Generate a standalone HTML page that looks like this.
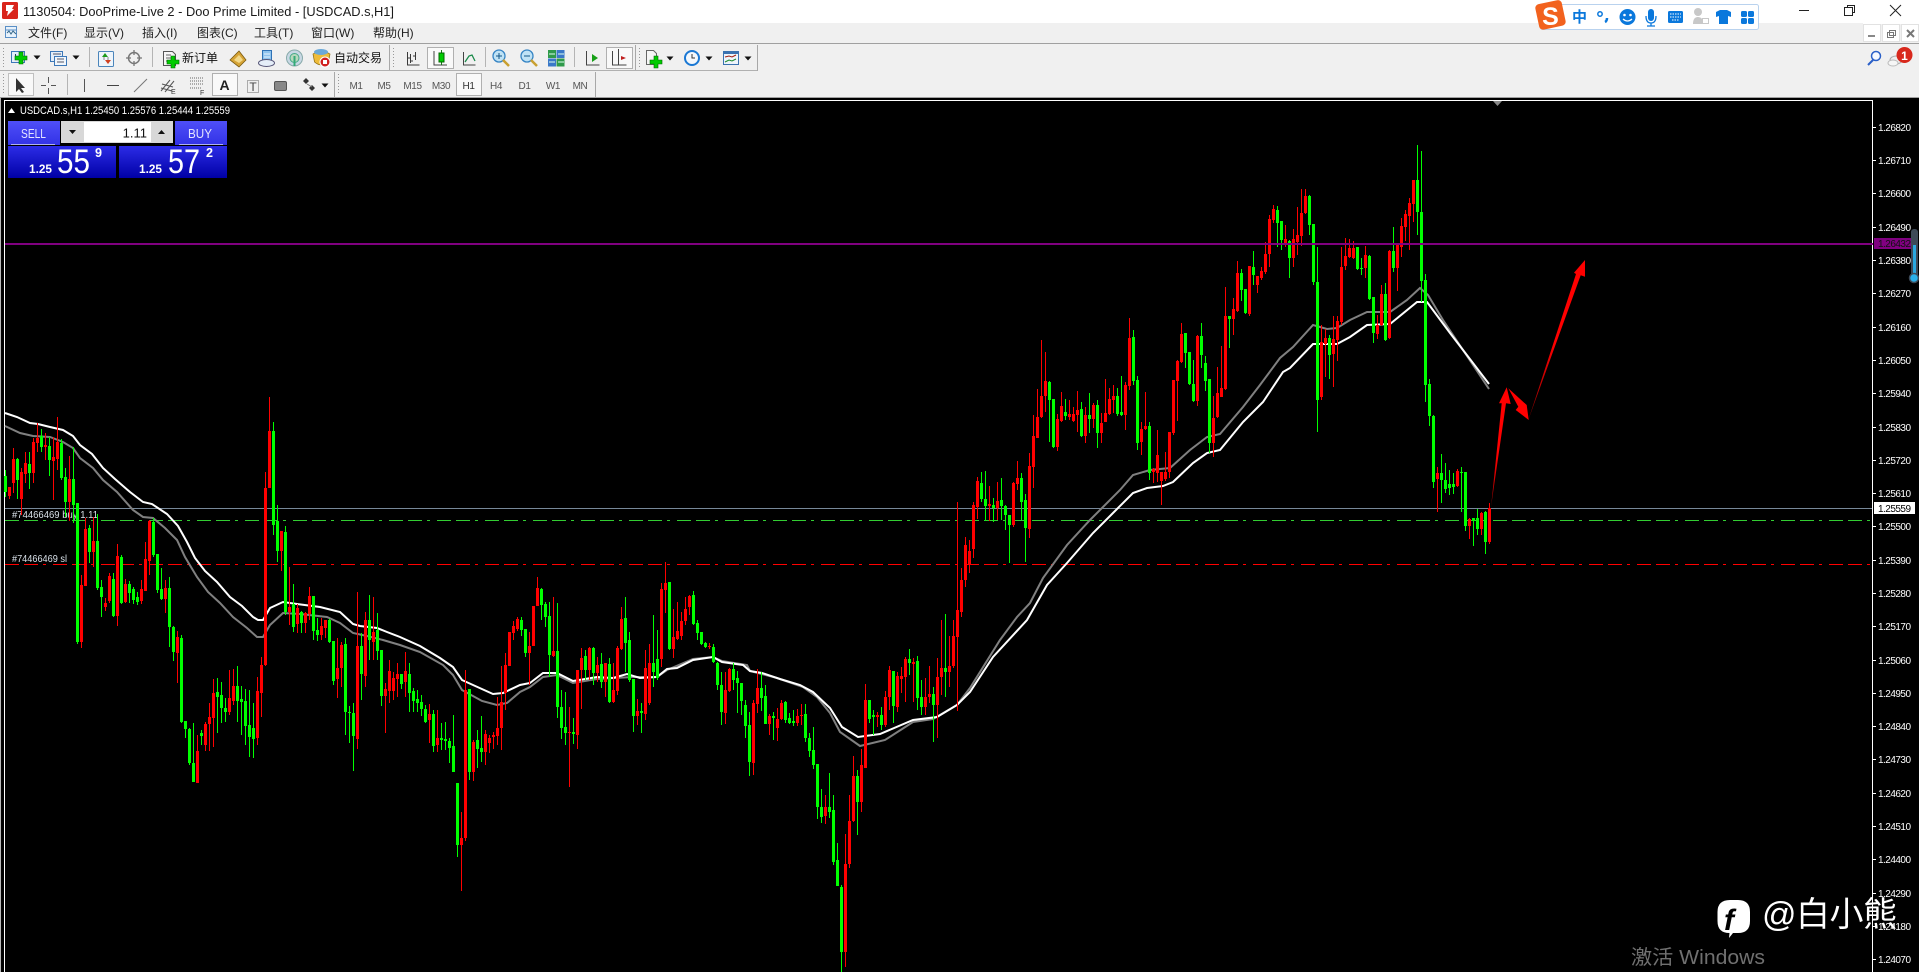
<!DOCTYPE html>
<html><head><meta charset="utf-8"><title>MT4</title>
<style>html,body{margin:0;padding:0;background:#000;overflow:hidden}svg{display:block}</style></head><body>
<svg xmlns="http://www.w3.org/2000/svg" width="1919" height="972" viewBox="0 0 1919 972" font-family="'Liberation Sans','Noto Sans CJK SC',sans-serif">
<defs>
<linearGradient id="btn" x1="0" y1="0" x2="0" y2="1"><stop offset="0" stop-color="#4f4ff8"/><stop offset="1" stop-color="#3232e6"/></linearGradient>
<linearGradient id="prc" x1="0" y1="0" x2="0" y2="1"><stop offset="0" stop-color="#2c2ce6"/><stop offset="1" stop-color="#0000a6"/></linearGradient>
<linearGradient id="a1" gradientUnits="userSpaceOnUse" x1="1491" y1="507" x2="1506" y2="400"><stop offset="0" stop-color="#900"/><stop offset=".5" stop-color="#f00"/></linearGradient>
<linearGradient id="a3" gradientUnits="userSpaceOnUse" x1="1528" y1="420" x2="1570" y2="290"><stop offset="0" stop-color="#800"/><stop offset=".6" stop-color="#f00"/></linearGradient>
<g id="plus"><path d="M-2-6h4v4h4v4h-4v4h-4v-4h-4v-4h4z" fill="#0c0" stroke="#060" stroke-width=".6"/></g>
<g id="dd"><path d="M-3.500-1.500h7l-3.500 4z" fill="#111"/></g>
</defs>
<!-- window chrome -->
<rect width="1919" height="98" fill="#f0f0f0"/>
<rect width="1919" height="23" fill="#fff"/>
<rect x="1863" y="23" width="56" height="1" fill="#fff"/>
<rect y="43" width="1919" height="1" fill="#a0a0a0"/>
<rect y="70" width="758" height="1" fill="#b0b0b0"/>
<rect y="97" width="1919" height="1" fill="#a0a0a0"/>
<!-- title -->
<rect x="2" y="2" width="16" height="17" rx="1.500" fill="#d9251c"/>
<path d="M6 5h8l-2 4h2l-7 7 1-5H6z" fill="#fff"/>
<text x="23" y="16" font-size="13" fill="#1a1a1a" textLength="371" lengthAdjust="spacingAndGlyphs">1130504: DooPrime-Live 2 - Doo Prime Limited - [USDCAD.s,H1]</text>
<!-- menu -->
<rect x="5.500" y="26.500" width="11" height="11" fill="#e8f2fb" stroke="#5a8fc6"/>
<path d="M7 33l2-2 2 3 2-3 3 3" fill="none" stroke="#368" stroke-width="1"/><path d="M5 30h12" stroke="#5a8fc6"/>
<g font-size="12" fill="#222">
<text x="28" y="37">文件(F)</text><text x="84" y="37">显示(V)</text><text x="142" y="37">插入(I)</text><text x="197" y="37">图表(C)</text><text x="254" y="37">工具(T)</text><text x="311" y="37">窗口(W)</text><text x="373" y="37">帮助(H)</text>
</g>
<!-- toolbar separators -->
<g fill="#b4b4b4">
<rect x="89" y="47" width="1" height="20"/><rect x="152" y="47" width="1" height="20"/><rect x="485" y="47" width="1" height="20"/><rect x="574" y="47" width="1" height="20"/>
<rect x="67" y="74" width="1" height="21"/>
</g>
<g fill="#a8a8a8">
<rect x="389" y="45" width="1" height="25"/><rect x="757" y="45" width="1" height="26"/><rect x="635" y="45" width="1" height="25"/>
<rect x="334" y="72" width="1" height="25"/><rect x="595" y="72" width="1" height="25"/>
</g>
<path d="M3.500 48V67M3.500 74V95M393.500 48V67M338.500 74V95M639.500 48V67" stroke="#999" stroke-dasharray="1 2"/>
<!-- row 1 icons -->
<rect x="11.500" y="51.500" width="13" height="11" fill="#e4eef9" stroke="#3d78b8"/><path d="M15.500 54v6M19.500 53v4" stroke="#245" fill="none"/><use href="#plus" x="21" y="58"/><use href="#dd" x="37" y="57"/>
<rect x="50.500" y="51.500" width="12" height="10" fill="#e4eef9" stroke="#3d78b8"/><rect x="54.500" y="56.500" width="12" height="9" fill="#f0f6fc" stroke="#3d78b8"/><path d="M53 54h8M57 59h7M57 62h7" stroke="#556"/><use href="#dd" x="76" y="57"/>
<rect x="98.500" y="51.500" width="15" height="15" rx="1" fill="#eef5fb" stroke="#4b85bb"/><path d="M102 57l3-4 3 4z" fill="#1a9a1a"/><path d="M105 60l3 4 3-4z" fill="#d04020"/><path d="M104 57v3M108 57v3" stroke="#888"/>
<circle cx="134" cy="58" r="5.500" fill="none" stroke="#777" stroke-width="1.500"/><path d="M134 50v5M134 61v5M126 58h5M137 58h5" stroke="#777" stroke-width="1.300"/>
<path d="M163.500 51.500h9l3 3v11h-12z" fill="#f6f6f6" stroke="#555"/><path d="M166 55h5M166 58h6M166 61h3" stroke="#666"/><use href="#plus" x="173" y="62"/>
<text x="182" y="62" font-size="12" fill="#111">新订单</text>
<path d="M230 60l9-9 7 9-7 7z" fill="#d6a436" stroke="#7a5a10" stroke-width=".8"/><path d="M234 60l5-5 4 5-4 3z" fill="#f2d98a"/>
<rect x="262.500" y="50.500" width="9" height="10" fill="#8fc4ee" stroke="#2f72b6"/><path d="M264 54h6M264 57h6" stroke="#e8f4ff"/><ellipse cx="266.500" cy="63" rx="8" ry="3.500" fill="#e5eef8" stroke="#557"/>
<circle cx="294.500" cy="58" r="8" fill="#c8d8e4" stroke="#8aa"/><circle cx="294.500" cy="58" r="4.500" fill="#b8d8bc" stroke="#4a8"/><rect x="293.500" y="56" width="2" height="10" fill="#3a7"/>
<path d="M313 54q8.500-5 17 0l-1.500 8q-7 6-14 0z" fill="#eebc3a" stroke="#8a6a10" stroke-width=".7"/><ellipse cx="321" cy="52" rx="7" ry="3" fill="#6aa8d8"/><circle cx="325" cy="62" r="5" fill="#d02020" stroke="#fff"/><rect x="323" y="60" width="4" height="4" fill="#fff"/>
<text x="334" y="62" font-size="12" fill="#111">自动交易</text>
<path d="M407.500 52v13h12M410.500 54v9M408 58h2.500M410.500 61h2.500M415.500 52v8M413 56h2.500" fill="none" stroke="#3a3a3a"/>
<rect x="427.500" y="47.500" width="26" height="21" fill="#f9f9f9" stroke="#b0b0b0"/>
<path d="M434 51v14h13" fill="none" stroke="#444"/><path d="M441.500 50v15" stroke="#1a7a1a"/><rect x="439" y="53" width="5" height="9" fill="#0c0" stroke="#060"/>
<path d="M463.500 52v13h12" fill="none" stroke="#444"/><path d="M465 62l4-6 3-1 3 6" fill="none" stroke="#1a8a4a" stroke-width="1.300"/>
<circle cx="499" cy="56" r="6" fill="#bfe2f5" stroke="#3584c4" stroke-width="1.300"/><path d="M496 56h6M499 53v6" stroke="#158"/><path d="M503 60l6 6" stroke="#c9a030" stroke-width="2.500"/>
<circle cx="527" cy="56" r="6" fill="#bfe2f5" stroke="#3584c4" stroke-width="1.300"/><path d="M524 56h6" stroke="#158"/><path d="M531 60l6 6" stroke="#c9a030" stroke-width="2.500"/>
<rect x="548" y="50" width="8" height="8" fill="#2f9a4a"/><rect x="556.500" y="50" width="8" height="8" fill="#3a78c8"/><rect x="548" y="58.500" width="8" height="8" fill="#3a78c8"/><rect x="556.500" y="58.500" width="8" height="8" fill="#2f9a4a"/><path d="M549 54h6M558 54h6M549 62h6M558 62h6" stroke="#dfe"/>
<path d="M586.500 51v14h13" fill="none" stroke="#444"/><path d="M592 54l6 4-6 4z" fill="#16a016"/>
<rect x="606.500" y="47.500" width="26" height="21" fill="#f9f9f9" stroke="#b0b0b0"/><path d="M612.500 51v14h14M618.500 49v16" fill="none" stroke="#444"/><path d="M626 58l-5-2v4z" fill="#c02020"/>
<path d="M646.500 50.500h7l3 3v11h-10z" fill="#f6f6f6" stroke="#666"/><use href="#plus" x="656" y="62"/><use href="#dd" x="670" y="58"/>
<circle cx="692" cy="58" r="7" fill="#f4f8fc" stroke="#1a78d4" stroke-width="2"/><path d="M692 54v4h3" fill="none" stroke="#333"/><use href="#dd" x="709" y="58"/>
<rect x="723.500" y="51.500" width="15" height="13" fill="#eef4fb" stroke="#3a72b0"/><rect x="724" y="52" width="14" height="2" fill="#3a72b0"/><path d="M725 57l4-1 3 1 4-2" fill="none" stroke="#a02010"/><path d="M725 62l4-2 3 1 4-2" fill="none" stroke="#1a8a2a"/><use href="#dd" x="748" y="58"/>
<!-- row 2 icons -->
<rect x="8.500" y="73.500" width="25" height="22" fill="#f9f9f9" stroke="#c0c0c0"/><path d="M16 78v14l3-3 3 4 2-1-3-4h4z" fill="#333"/>
<path d="M48.500 77v6M48.500 88v6M41 85.500h5M51 85.500h5" stroke="#555"/>
<path d="M84.500 79v13" stroke="#555"/><path d="M107 85.500h12" stroke="#444"/><path d="M134 92l13-13" stroke="#777"/>
<path d="M161 91l9-11M165 92l9-11M162 84l11 3M161 88l11 3" stroke="#555" fill="none"/><text x="171" y="94" font-size="7" fill="#333">E</text>
<path d="M190 78h13M190 81h13M190 84h13M190 88h11" stroke="#666" stroke-dasharray="1 1"/><text x="200" y="95" font-size="7" fill="#333">F</text>
<rect x="212.500" y="73.500" width="25" height="22" fill="#f9f9f9" stroke="#b0b0b0"/><text x="224.500" y="90" font-size="14" font-weight="bold" fill="#222" text-anchor="middle">A</text>
<rect x="247.500" y="80.500" width="11" height="12" fill="none" stroke="#666" stroke-dasharray="1 1"/><text x="253" y="91" font-size="12" fill="#444" text-anchor="middle">T</text>
<rect x="274.500" y="81.500" width="12" height="9" rx="1.500" fill="#888" stroke="#555"/>
<path d="M306 78l3 3-3 3-3-3zM312 85l3 3-3 3-3-3z" fill="#333"/><path d="M307 84l5 3" stroke="#777"/><use href="#dd" x="325" y="85"/>
<rect x="456.500" y="73.500" width="25" height="22" fill="#f9f9f9" stroke="#b0b0b0"/>
<g font-size="10" fill="#555" text-anchor="middle" letter-spacing="-.4">
<text x="356" y="89">M1</text><text x="384" y="89">M5</text><text x="412.500" y="89">M15</text><text x="441" y="89">M30</text><text x="468.500" y="89" fill="#333">H1</text><text x="496" y="89">H4</text><text x="524.500" y="89">D1</text><text x="553" y="89">W1</text><text x="580" y="89">MN</text>
</g>
<!-- right toolbar -->
<circle cx="1876" cy="56" r="4.500" fill="#f4f8ff" stroke="#2a60c8" stroke-width="1.500"/><path d="M1873 60l-5 5" stroke="#2a60c8" stroke-width="2"/>
<ellipse cx="1896" cy="60" rx="6" ry="4" fill="#eee" stroke="#aaa"/><ellipse cx="1893" cy="63" rx="5" ry="3" fill="#f6f6f6" stroke="#bbb"/>
<circle cx="1904.500" cy="55" r="8" fill="#d8281c"/><text x="1904.500" y="60" font-size="12" font-weight="bold" fill="#fff" text-anchor="middle">1</text>
<!-- MDI buttons -->
<g fill="#fff" stroke="#e2e2e2"><rect x="1863.500" y="24.500" width="17" height="17"/><rect x="1882.500" y="24.500" width="17" height="17"/><rect x="1901.500" y="24.500" width="17" height="17"/></g>
<rect x="1868" y="35" width="7" height="2" fill="#888"/>
<path d="M1889.500 30.500h6v5h-6zM1887.500 32.500h6v5h-6z" fill="#fff" stroke="#777"/>
<path d="M1907 30l7 7M1914 30l-7 7" stroke="#777" stroke-width="2"/>
<!-- window controls -->
<path d="M1799 10.500h10" stroke="#222"/><path d="M1847.500 7.500V5.500h7v7h-2M1844.500 7.500h8v8h-8z" fill="none" stroke="#222"/><path d="M1890 5l11 11M1901 5l-11 11" stroke="#222"/>
<!-- sogou bar -->
<rect x="1540.500" y="4.500" width="218" height="25" rx="2" fill="#fff" stroke="#b9d2ee"/>
<g transform="rotate(-12 1550 15)"><rect x="1537" y="2" width="27" height="26" rx="4" fill="#f2621e"/></g>
<text x="1550.500" y="25" font-size="25" font-weight="bold" fill="#fff" text-anchor="middle">S</text>
<text x="1572" y="22" font-size="15" font-weight="bold" fill="#0a78dc">中</text>
<circle cx="1600" cy="14" r="2.200" fill="none" stroke="#0a78dc" stroke-width="1.500"/><path d="M1607 18q0 3-2 4" stroke="#0a78dc" stroke-width="2.500" fill="none"/>
<circle cx="1627.500" cy="17" r="8" fill="#0a78dc"/><circle cx="1624.500" cy="15" r="1.300" fill="#fff"/><circle cx="1630.500" cy="15" r="1.300" fill="#fff"/><path d="M1623 19q4.500 4 9 0" fill="none" stroke="#fff" stroke-width="1.300"/>
<rect x="1648" y="9" width="6" height="12" rx="3" fill="#0a78dc"/><path d="M1646 16q0 7 5 7t5-7M1651 23v3M1647 26h8" fill="none" stroke="#0a78dc" stroke-width="1.300"/>
<rect x="1668" y="11" width="15" height="12" rx="1.500" fill="#0a78dc"/><path d="M1670 14h11M1670 17h11M1672 20h7" stroke="#fff" stroke-dasharray="1.500 1"/>
<circle cx="1698" cy="12" r="4" fill="#c8c8c8"/><path d="M1693 24q0-7 5-7 3 0 5 3v4z" fill="#c8c8c8"/><rect x="1702.500" y="18.500" width="6" height="5" fill="#fff" stroke="#c8c8c8"/>
<path d="M1716 12l4-2h7l4 2 0 5-3-1v8h-9v-8l-3 1z" fill="#0a78dc"/>
<rect x="1741" y="11" width="6" height="6" rx="1.500" fill="#0a78dc"/><rect x="1748" y="11" width="6" height="6" rx="1.500" fill="#0a78dc"/><rect x="1741" y="18" width="6" height="6" rx="1.500" fill="#0a78dc"/><rect x="1748" y="18" width="6" height="6" rx="1.500" fill="#0a78dc"/>
<!-- chart -->
<rect y="98" width="1919" height="874" fill="#000"/>
<rect y="98" width="1" height="874" fill="#b8b8b8"/>
<rect x="4" y="100" width="1869" height="1" fill="#fff"/>
<rect x="4" y="100" width="1" height="872" fill="#fff"/>
<rect x="1872" y="100" width="1" height="872" fill="#fff"/>
<path d="M1493 101h9l-4.500 5z" fill="#888"/>
<!-- level lines -->
<g shape-rendering="crispEdges">
<path d="M5 508.500H1872" stroke="#778899"/>
<path d="M5 520.500H1872" stroke="#32cd32" stroke-dasharray="14 5 14 5 3 7"/>
<path d="M5 564.500H1872" stroke="#f00" stroke-dasharray="14 5 14 5 3 7"/>
</g>
<!-- moving averages -->
<polyline fill="none" stroke="#808080" stroke-width="2" points="5,426 20,433 33,436 50,437 63,442 73,448 80,458 93,468 103,480 117,492 133,510 143,517 153,518 165,528 177,540 185,557 197,577 208,592 220,603 233,617 247,628 257,637 263,637 270,625 283,613 300,614 327,617 340,623 353,633 367,636 383,640 400,645 420,652 443,665 453,675 462,690 482,701 497,705 507,703 520,692 530,687 543,677 557,675 573,683 597,679 633,677 657,677 667,670 693,659 713,657 722,661 747,665 750,671 777,678 803,687 817,697 830,713 840,732 860,746 885,740 913,722 933,719 957,705 970,688 1000,640 1017,617 1030,603 1043,578 1067,545 1090,520 1120,490 1133,475 1150,470 1170,468 1190,450 1207,437 1220,434 1243,407 1260,385 1280,358 1293,347 1313,325 1327,329 1337,328 1350,320 1367,312 1390,312 1407,300 1420,288 1428,295 1443,320 1463,350 1483,380 1489,389"/>
<polyline fill="none" stroke="#fff" stroke-width="2" points="5,413 17,417 30,423 38,424 50,427 63,430 73,436 80,445 92,454 103,468 115,479 130,492 143,502 152,504 167,514 178,526 187,542 195,558 205,571 217,582 230,597 242,606 253,617 258,620 263,620 270,608 283,602 297,604 320,607 340,612 353,624 360,626 377,628 387,632 400,637 420,646 440,658 453,667 462,680 473,685 493,694 503,693 520,685 530,683 543,673 557,673 573,681 597,677 613,678 627,674 640,678 657,677 667,669 677,668 693,660 713,657 722,662 743,665 750,671 762,673 780,679 800,685 813,692 830,708 842,727 858,737 880,734 913,720 937,717 957,705 970,692 993,657 1027,620 1047,585 1067,563 1093,533 1113,513 1133,493 1147,488 1163,486 1173,482 1193,463 1207,453 1220,450 1243,422 1263,402 1283,372 1290,368 1313,344 1337,344 1350,337 1367,325 1390,324 1417,302 1427,302 1450,333 1463,350 1489,384"/>
<!-- order labels -->
<text x="12" y="518" font-size="10" fill="#d8e0e8" textLength="86" lengthAdjust="spacingAndGlyphs">#74466469 buy 1.11</text>
<text x="12" y="562" font-size="10" fill="#d8e0e8" textLength="55" lengthAdjust="spacingAndGlyphs">#74466469 sl</text>
<!-- candles -->
<g fill="none" shape-rendering="crispEdges">
<path stroke="#0f0" d="M5.500 470V497M17.500 458V499M29.500 452V489M41.500 429V452M49.500 437V476M61.500 439V480M65.500 468V517M73.500 447V523M77.500 503V644M89.500 525V563M97.500 514V590M101.500 580V617M113.500 573V617M121.500 555V604M129.500 581V603M133.500 587V604M137.500 592V605M153.500 518V557M157.500 554V593M161.500 568V600M169.500 577V647M173.500 626V661M181.500 635V723M185.500 721V738M189.500 728V765M193.500 723V782M201.500 730V745M217.500 678V733M221.500 682V723M225.500 698V722M237.500 666V722M241.500 686V735M245.500 689V745M249.500 690V757M253.500 703V758M273.500 422V535M277.500 505V562M285.500 526V615M293.500 584V632M301.500 611V633M313.500 596V640M317.500 618V641M329.500 619V643M333.500 641V685M345.500 638V735M349.500 706V743M353.500 703V771M361.500 633V700M369.500 595V660M377.500 613V660M381.500 650V706M401.500 674V689M409.500 663V712M413.500 688V712M417.500 690V712M421.500 695V716M425.500 705V723M433.500 710V752M441.500 723V750M445.500 722V750M449.500 738V763M453.500 715V772M457.500 783V857M469.500 689V780M477.500 730V768M481.500 716V762M521.500 617V636M525.500 629V657M541.500 588V620M545.500 602V627M549.500 602V677M557.500 603V718M561.500 690V739M565.500 692V745M573.500 718V744M585.500 650V680M593.500 647V685M601.500 653V688M609.500 658V703M625.500 597V672M629.500 632V682M633.500 679V732M641.500 703V733M653.500 615V687M657.500 630V680M669.500 582V650M693.500 591V625M697.500 620V640M701.500 632V645M705.500 642V648M713.500 644V663M717.500 662V690M721.500 672V725M733.500 663V690M737.500 671V713M741.500 683V715M745.500 700V738M749.500 712V776M761.500 672V711M765.500 685V724M773.500 712V740M785.500 701V723M789.500 713V724M793.500 710V726M805.500 704V742M809.500 733V757M813.500 727V769M817.500 764V819M821.500 789V823M829.500 773V818M833.500 795V865M837.500 843V886M841.500 885V972M857.500 770V835M869.500 700V723M873.500 710V735M881.500 707V730M893.500 671V723M909.500 649V675M917.500 656V710M921.500 680V715M933.500 687V742M945.500 614V697M981.500 472V502M985.500 471V521M993.500 498V522M1001.500 478V520M1005.500 505V530M1009.500 515V563M1021.500 473V520M1025.500 494V562M1049.500 381V442M1053.500 399V448M1065.500 399V420M1081.500 402V437M1089.500 393V433M1097.500 400V448M1117.500 388V416M1121.500 376V416M1133.500 330V385M1137.500 376V450M1149.500 422V480M1185.500 333V368M1189.500 352V385M1193.500 360V402M1201.500 323V368M1205.500 356V391M1209.500 379V453M1229.500 316V348M1241.500 269V301M1245.500 289V314M1253.500 251V285M1277.500 206V247M1281.500 221V250M1289.500 240V278M1309.500 195V235M1313.500 224V285M1317.500 247V432M1329.500 335V379M1357.500 247V270M1361.500 258V275M1369.500 255V300M1373.500 297V343M1385.500 283V341M1393.500 227V272M1417.500 145V235M1421.500 151V302M1425.500 274V402M1429.500 379V426M1433.500 415V488M1441.500 454V503M1445.500 463V493M1449.500 470V495M1453.500 473V494M1461.500 467V512M1465.500 472V531M1473.500 518V546M1477.500 509V535M1485.500 511V554"/>
<path stroke="#0f0" stroke-width="3" d="M5.500 476V492M17.500 459V480M29.500 464V473M41.500 436V447M49.500 446V460M61.500 443V478M65.500 477V502M73.500 479V505M77.500 503V642M89.500 528V552M97.500 541V588M101.500 587V597M113.500 579V616M121.500 557V603M129.500 584V593M133.500 589V600M137.500 597V602M153.500 522V555M157.500 554V590M161.500 589V599M169.500 588V627M173.500 627V652M181.500 638V722M185.500 721V729M189.500 729V763M193.500 763V782M201.500 733V736M217.500 692V697M221.500 695V708M225.500 708V712M237.500 686V701M241.500 699V702M245.500 701V726M249.500 725V737M253.500 728V739M273.500 431V525M277.500 521V551M285.500 532V612M293.500 604V627M301.500 612V623M313.500 596V631M317.500 630V635M329.500 620V642M333.500 641V681M345.500 644V712M349.500 712V713M353.500 713V736M361.500 646V674M369.500 620V640M377.500 630V651M381.500 650V696M401.500 674V684M409.500 674V693M413.500 691V701M417.500 699V703M421.500 702V709M425.500 709V722M433.500 714V746M441.500 738V740M445.500 739V741M449.500 741V748M453.500 746V772M457.500 783V845M469.500 689V772M477.500 740V749M481.500 748V752M521.500 620V630M525.500 629V653M541.500 589V605M545.500 604V617M549.500 616V655M557.500 651V707M561.500 707V728M565.500 727V733M573.500 732V734M585.500 656V670M593.500 648V673M601.500 664V682M609.500 664V702M625.500 618V643M629.500 640V680M633.500 679V716M641.500 711V713M653.500 663V672M657.500 659V678M669.500 582V649M693.500 595V624M697.500 623V633M701.500 632V644M705.500 643V647M713.500 647V662M717.500 663V685M721.500 685V712M733.500 669V680M737.500 678V683M741.500 683V701M745.500 705V726M749.500 725V762M761.500 688V698M765.500 696V724M773.500 716V718M785.500 702V720M789.500 718V723M793.500 721V723M805.500 714V738M809.500 738V751M813.500 750V765M817.500 764V807M821.500 807V817M829.500 807V812M833.500 810V862M837.500 860V886M841.500 887V952M857.500 776V802M869.500 700V719M873.500 715V717M881.500 715V725M893.500 671V706M909.500 659V663M917.500 661V698M921.500 697V707M933.500 694V705M945.500 668V672M981.500 483V499M985.500 499V506M993.500 505V508M1001.500 500V506M1005.500 506V515M1009.500 515V525M1021.500 478V502M1025.500 500V528M1049.500 382V400M1053.500 399V447M1065.500 412V416M1081.500 409V436M1089.500 415V419M1097.500 405V433M1117.500 396V414M1121.500 412V415M1133.500 337V381M1137.500 380V443M1149.500 426V473M1185.500 333V353M1189.500 352V384M1193.500 384V401M1201.500 336V355M1205.500 363V381M1209.500 379V443M1229.500 316V319M1241.500 273V290M1245.500 289V313M1253.500 267V275M1277.500 210V223M1281.500 221V240M1289.500 241V258M1309.500 196V225M1313.500 224V282M1317.500 282V400M1329.500 338V355M1357.500 247V269M1361.500 268V269M1369.500 256V299M1373.500 297V333M1385.500 294V340M1393.500 251V268M1417.500 180V212M1421.500 212V281M1425.500 280V385M1429.500 384V416M1433.500 416V482M1441.500 473V480M1445.500 480V489M1449.500 484V488M1453.500 484V487M1461.500 472V473M1465.500 472V526M1473.500 518V521M1477.500 518V529M1485.500 512V542"/>
<path stroke="#f00" d="M9.500 487V499M13.500 448V493M21.500 468V515M25.500 452V483M33.500 438V483M37.500 423V452M45.500 433V460M53.500 437V500M57.500 417V470M69.500 456V521M81.500 575V648M85.500 518V586M93.500 517V567M105.500 598V611M109.500 573V603M117.500 544V626M125.500 579V603M141.500 580V604M145.500 542V591M149.500 520V575M165.500 580V613M177.500 631V683M197.500 735V783M205.500 722V751M209.500 703V751M213.500 679V747M229.500 670V715M233.500 669V705M257.500 677V745M261.500 657V717M265.500 472V666M269.500 397V488M281.500 531V571M289.500 567V625M297.500 604V633M305.500 612V633M309.500 587V620M321.500 618V640M325.500 620V638M337.500 638V698M341.500 642V687M357.500 592V749M365.500 612V687M373.500 597V660M385.500 683V733M389.500 660V703M393.500 672V700M397.500 663V697M405.500 652V697M429.500 704V743M437.500 710V752M461.500 812V891M465.500 670V841M473.500 740V781M485.500 730V765M489.500 735V753M493.500 732V749M497.500 697V745M501.500 666V750M505.500 653V710M509.500 632V666M513.500 621V640M517.500 617V631M529.500 632V685M533.500 606V646M537.500 577V606M553.500 597V657M569.500 707V787M577.500 670V749M581.500 648V709M589.500 647V680M597.500 657V682M605.500 663V697M613.500 663V703M617.500 646V695M621.500 607V650M637.500 699V725M645.500 650V720M649.500 644V705M661.500 583V667M665.500 562V613M673.500 609V658M677.500 602V640M681.500 612V640M685.500 597V625M689.500 595V615M709.500 643V649M725.500 672V724M729.500 668V692M753.500 700V775M757.500 669V713M769.500 714V735M777.500 708V741M781.500 700V720M797.500 709V726M801.500 704V725M825.500 795V824M845.500 834V967M849.500 795V868M853.500 756V822M861.500 749V812M865.500 684V768M877.500 712V727M885.500 691V727M889.500 666V710M897.500 672V712M901.500 667V693M905.500 657V702M913.500 658V702M925.500 678V715M929.500 666V703M937.500 658V738M941.500 620V695M949.500 636V687M953.500 620V668M957.500 502V711M961.500 568V617M965.500 537V587M969.500 540V573M973.500 502V558M977.500 477V519M989.500 486V521M997.500 482V520M1013.500 482V527M1017.500 461V490M1029.500 453V538M1033.500 415V488M1037.500 389V438M1041.500 340V418M1045.500 352V412M1057.500 414V451M1061.500 392V422M1069.500 400V420M1073.500 407V422M1077.500 391V432M1085.500 407V443M1093.500 403V428M1101.500 413V443M1105.500 379V422M1109.500 388V415M1113.500 385V413M1125.500 382V430M1129.500 318V390M1141.500 422V455M1145.500 392V430M1153.500 468V483M1157.500 430V482M1161.500 472V505M1165.500 452V481M1169.500 432V478M1173.500 380V435M1177.500 360V421M1181.500 323V363M1197.500 335V406M1213.500 396V457M1217.500 367V418M1221.500 346V397M1225.500 287V390M1233.500 298V335M1237.500 261V312M1249.500 266V316M1257.500 276V293M1261.500 267V280M1265.500 242V274M1269.500 215V267M1273.500 205V223M1285.500 225V247M1293.500 229V267M1297.500 207V255M1301.500 189V246M1305.500 189V214M1321.500 325V400M1325.500 329V377M1333.500 316V387M1337.500 316V361M1341.500 247V325M1345.500 238V270M1349.500 239V258M1353.500 241V259M1365.500 246V278M1377.500 315V339M1381.500 285V326M1389.500 250V339M1397.500 243V291M1401.500 218V257M1405.500 210V241M1409.500 198V250M1413.500 180V222M1437.500 467V512M1457.500 469V487M1469.500 518V539M1481.500 512V535M1489.500 503V544"/>
<path stroke="#f00" stroke-width="3" d="M9.500 487V496M13.500 459V483M21.500 472V499M25.500 463V474M33.500 442V473M37.500 438V443M45.500 445V447M53.500 457V461M57.500 442V459M69.500 479V502M81.500 585V642M85.500 529V586M93.500 541V552M105.500 603V607M109.500 576V601M117.500 556V616M125.500 584V602M141.500 589V601M145.500 559V591M149.500 521V561M165.500 588V599M177.500 637V653M197.500 751V783M205.500 724V745M209.500 717V724M213.500 693V718M229.500 698V712M233.500 686V701M257.500 691V738M261.500 665V693M265.500 488V665M269.500 431V488M281.500 531V551M289.500 607V612M297.500 608V624M305.500 613V623M309.500 596V614M321.500 626V635M325.500 620V628M337.500 668V679M341.500 645V668M357.500 646V739M365.500 620V676M373.500 632V642M385.500 689V696M389.500 671V691M393.500 678V691M397.500 674V679M405.500 671V682M429.500 714V720M437.500 738V745M461.500 838V845M465.500 690V838M473.500 742V772M485.500 734V752M489.500 738V743M493.500 735V737M497.500 728V736M501.500 702V728M505.500 665V693M509.500 632V666M513.500 626V633M517.500 619V629M529.500 646V653M533.500 606V646M537.500 588V606M553.500 651V656M569.500 732V733M577.500 670V735M581.500 658V670M589.500 648V670M597.500 665V673M605.500 663V682M613.500 690V702M617.500 648V691M621.500 619V649M637.500 711V716M645.500 668V714M649.500 663V703M661.500 589V659M665.500 583V590M673.500 637V649M677.500 631V639M681.500 621V636M685.500 609V621M689.500 596V607M709.500 646V647M725.500 690V713M729.500 669V691M753.500 703V763M757.500 688V704M769.500 716V724M777.500 719V728M781.500 703V719M797.500 716V723M801.500 715V716M825.500 807V816M845.500 864V952M849.500 821V864M853.500 776V821M861.500 765V802M865.500 700V768M877.500 715V717M885.500 697V725M889.500 670V697M897.500 676V707M901.500 676V679M905.500 659V677M913.500 662V664M925.500 697V707M929.500 694V697M937.500 677V705M941.500 668V677M949.500 666V672M953.500 636V666M957.500 610V637M961.500 580V612M965.500 545V580M969.500 551V565M973.500 505V549M977.500 481V507M989.500 504V506M997.500 501V508M1013.500 483V525M1017.500 478V484M1029.500 466V529M1033.500 436V467M1037.500 417V438M1041.500 396V417M1045.500 381V396M1057.500 419V447M1061.500 406V421M1069.500 414V417M1073.500 414V421M1077.500 410V415M1085.500 415V436M1093.500 405V419M1101.500 423V433M1105.500 413V422M1109.500 399V414M1113.500 396V400M1125.500 385V415M1129.500 338V386M1141.500 429V442M1145.500 426V429M1153.500 469V472M1157.500 455V473M1161.500 472V481M1165.500 472V479M1169.500 432V472M1173.500 380V433M1177.500 361V381M1181.500 334V362M1197.500 336V401M1213.500 418V443M1217.500 393V417M1221.500 388V397M1225.500 316V389M1233.500 309V319M1237.500 273V311M1249.500 266V314M1257.500 276V285M1261.500 271V278M1265.500 254V272M1269.500 219V254M1273.500 209V220M1285.500 239V243M1293.500 239V258M1297.500 235V242M1301.500 213V236M1305.500 196V213M1321.500 342V397M1325.500 338V344M1333.500 339V354M1337.500 321V340M1341.500 267V322M1345.500 256V266M1349.500 248V257M1353.500 248V258M1365.500 255V268M1377.500 325V334M1381.500 294V325M1389.500 251V338M1397.500 243V268M1401.500 226V247M1405.500 214V227M1409.500 203V216M1413.500 180V204M1437.500 473V479M1457.500 471V486M1469.500 519V526M1481.500 513V529M1489.500 508V542"/>
<path d="M5 244H1873" stroke="#800080" stroke-width="2"/>
</g>
<!-- arrows -->
<path fill="url(#a1)" d="M1491 507L1501.700 403.300 1499 403.300 1506.700 387.300 1510.700 404 1506 403.300z"/>
<path fill="#f00" d="M1508.300 388.300L1526.700 405 1528.700 420 1515.700 410 1518.300 406.700z"/>
<path fill="url(#a3)" d="M1528.300 420L1576 274 1574 272.700 1585 260 1585 276.700 1580.700 275.300z"/>
<!-- one-click panel -->
<path d="M8 113l3.500-5 3.500 5z" fill="#fff"/>
<text x="20" y="114" font-size="11" fill="#fff" textLength="210" lengthAdjust="spacingAndGlyphs">USDCAD.s,H1  1.25450 1.25576 1.25444 1.25559</text>
<rect x="8" y="121" width="52" height="24" fill="url(#btn)"/><rect x="11" y="144" width="44" height="1" fill="#b0b0f0"/>
<rect x="175" y="121" width="52" height="24" fill="url(#btn)"/><rect x="179" y="144" width="44" height="1" fill="#b0b0f0"/>
<text x="21" y="138" font-size="13" fill="#e4e4ff" textLength="25" lengthAdjust="spacingAndGlyphs">SELL</text>
<text x="188" y="138" font-size="13" fill="#e4e4ff" textLength="24" lengthAdjust="spacingAndGlyphs">BUY</text>
<rect x="61" y="121" width="112" height="22" fill="#d8d8d8"/><rect x="84" y="122" width="67" height="20" fill="#fff"/>
<path d="M69 130h7l-3.500 4z" fill="#111"/><path d="M158 134h7l-3.500-4z" fill="#111"/>
<text x="147" y="137.500" font-size="13" fill="#111" text-anchor="end">1.11</text>
<rect x="8" y="146" width="108" height="32" fill="url(#prc)"/><rect x="119" y="146" width="108" height="32" fill="url(#prc)"/>
<g fill="#fff">
<text x="29" y="173" font-size="12" font-weight="bold" textLength="23" lengthAdjust="spacingAndGlyphs">1.25</text>
<text x="57" y="173" font-size="34" textLength="33" lengthAdjust="spacingAndGlyphs">55</text>
<text x="95" y="157" font-size="13" font-weight="bold" textLength="7" lengthAdjust="spacingAndGlyphs">9</text>
<text x="139" y="173" font-size="12" font-weight="bold" textLength="23" lengthAdjust="spacingAndGlyphs">1.25</text>
<text x="168" y="173" font-size="34" textLength="32" lengthAdjust="spacingAndGlyphs">57</text>
<text x="206" y="157" font-size="13" font-weight="bold" textLength="7" lengthAdjust="spacingAndGlyphs">2</text>
</g>
<!-- price axis -->
<g stroke="#fff" shape-rendering="crispEdges">
<path d="M1873 127.500h3M1873 160.500h3M1873 193.500h3M1873 227.500h3M1873 260.500h3M1873 293.500h3M1873 327.500h3M1873 360.500h3M1873 393.500h3M1873 427.500h3M1873 460.500h3M1873 493.500h3M1873 526.500h3M1873 560.500h3M1873 593.500h3M1873 626.500h3M1873 660.500h3M1873 693.500h3M1873 726.500h3M1873 759.500h3M1873 793.500h3M1873 826.500h3M1873 859.500h3M1873 893.500h3M1873 926.500h3M1873 959.500h3"/>
</g>
<rect x="1874" y="238" width="40" height="11" fill="#800080"/>
<rect x="1874" y="502" width="41" height="12" fill="#fff"/>
<g font-size="10" fill="#fff">
<text x="1878" y="131" textLength="33">1.26820</text>
<text x="1878" y="164" textLength="33">1.26710</text>
<text x="1878" y="197" textLength="33">1.26600</text>
<text x="1878" y="231" textLength="33">1.26490</text>
<text x="1878" y="264" textLength="33">1.26380</text>
<text x="1878" y="297" textLength="33">1.26270</text>
<text x="1878" y="331" textLength="33">1.26160</text>
<text x="1878" y="364" textLength="33">1.26050</text>
<text x="1878" y="397" textLength="33">1.25940</text>
<text x="1878" y="431" textLength="33">1.25830</text>
<text x="1878" y="464" textLength="33">1.25720</text>
<text x="1878" y="497" textLength="33">1.25610</text>
<text x="1878" y="530" textLength="33">1.25500</text>
<text x="1878" y="564" textLength="33">1.25390</text>
<text x="1878" y="597" textLength="33">1.25280</text>
<text x="1878" y="630" textLength="33">1.25170</text>
<text x="1878" y="664" textLength="33">1.25060</text>
<text x="1878" y="697" textLength="33">1.24950</text>
<text x="1878" y="730" textLength="33">1.24840</text>
<text x="1878" y="763" textLength="33">1.24730</text>
<text x="1878" y="797" textLength="33">1.24620</text>
<text x="1878" y="830" textLength="33">1.24510</text>
<text x="1878" y="863" textLength="33">1.24400</text>
<text x="1878" y="897" textLength="33">1.24290</text>
<text x="1878" y="930" textLength="33">1.24180</text>
<text x="1878" y="963" textLength="33">1.24070</text>
<text x="1878" y="247" textLength="33" fill="#111">1.26432</text>
<text x="1878" y="512" textLength="33" fill="#000">1.25559</text>
</g>
<!-- slider -->
<rect x="1911" y="229" width="7" height="50" rx="3" fill="#3e4a58"/><rect x="1913" y="245" width="3" height="34" fill="#2aa8e0"/><circle cx="1914" cy="278" r="4.500" fill="#2ab0ea" stroke="#3e4a58" stroke-width="1.500"/>
<!-- watermark -->
<path d="M1730 900h8q12 0 12 12v9q0 12-12 12h-5l-4 5 .5-5q-12 0-12-12v-9q0-12 12.500-12z" fill="#fff"/>
<text x="1724" y="930" font-size="30" font-weight="bold" font-style="italic" fill="#000">f</text>
<text x="1762" y="926" font-size="34" fill="#fff" textLength="135">@白小熊</text>
<text x="1631" y="964" font-size="20" fill="#707070" textLength="134" lengthAdjust="spacingAndGlyphs">激活 Windows</text>
</svg>
</body></html>
